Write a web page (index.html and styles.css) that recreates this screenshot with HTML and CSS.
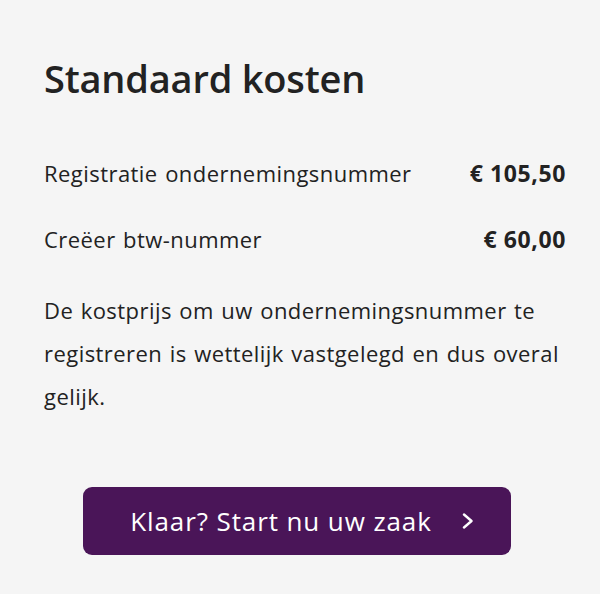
FILE: index.html
```html
<!DOCTYPE html>
<html lang="nl">
<head>
<meta charset="utf-8">
<title>Standaard kosten</title>
<link rel="stylesheet" href="styles.css">
</head>
<body>
<section class="costs">
  <h2 class="costs-title">Standaard kosten</h2>
  <div class="cost-row">
    <span class="cost-label">Registratie ondernemingsnummer</span>
    <span class="cost-price">€ 105,50</span>
  </div>
  <div class="cost-row">
    <span class="cost-label">Creëer btw-nummer</span>
    <span class="cost-price">€ 60,00</span>
  </div>
  <p class="costs-note">De kostprijs om uw ondernemingsnummer te registreren is wettelijk vastgelegd en dus overal gelijk.</p>
  <div class="cta-wrap">
    <a class="cta" href="#">Klaar? Start nu uw zaak
      <svg class="cta-icon" width="12" height="16" viewBox="0 0 12 16" aria-hidden="true"><path d="M2 1.5 L9.5 8 L2 14.5" fill="none" stroke="#fff" stroke-width="2.4" stroke-linecap="round" stroke-linejoin="round"/></svg>
    </a>
  </div>
</section>
</body>
</html>
```
FILE: styles.css
```css
html, body {
  margin: 0;
  padding: 0;
  background: #f5f5f5;
}
body {
  font-family: "Open Sans", "Noto Sans", sans-serif;
  color: #222;
}
.costs {
  padding: 50px 34px 0 44px;
}
.costs-title {
  margin: 0 0 51px;
  font-family: "Open Sans", sans-serif;
  font-weight: 600;
  font-size: 38px;
  letter-spacing: -0.2px;
  line-height: 56px;
  color: #222;
}
.cost-row {
  display: flex;
  justify-content: space-between;
  align-items: baseline;
  font-size: 22px;
  letter-spacing: 0.45px;
  word-spacing: 1.3px;
  line-height: 32px;
  margin-bottom: 34px;
}
.cost-price {
  font-weight: 700;
  font-size: 23px;
  letter-spacing: 0.6px;
  word-spacing: 0;
}
.costs-note {
  margin: 0;
  font-size: 22px;
  letter-spacing: 0.45px;
  word-spacing: 1.3px;
  line-height: 43px;
}
.cta-wrap {
  display: flex;
  padding: 69px 0 0 39px;
}
.cta {
  display: flex;
  align-items: center;
  justify-content: center;
  gap: 30px;
  width: 428px;
  height: 68px;
  box-sizing: border-box;
  padding-left: 10px;
  background: #4a1558;
  border-radius: 9px;
  color: #fff;
  text-decoration: none;
  font-size: 26px;
  letter-spacing: 0.9px;
  font-weight: 400;
}
.cta-icon {
  display: block;
}
```
